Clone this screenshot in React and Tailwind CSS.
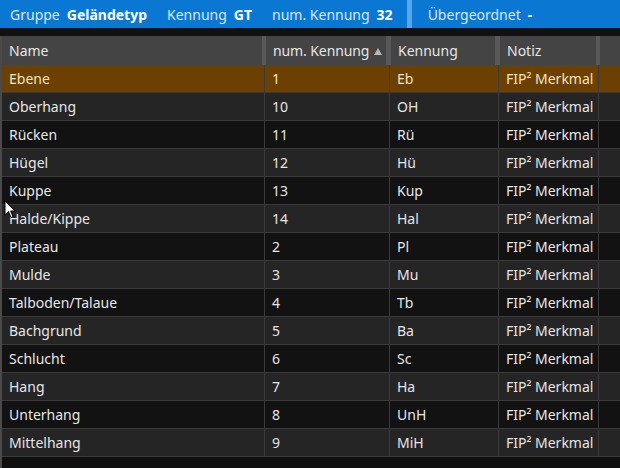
import React from "react";

const ROWS = [
  ["Ebene", "1", "Eb"],
  ["Oberhang", "10", "OH"],
  ["Rücken", "11", "Rü"],
  ["Hügel", "12", "Hü"],
  ["Kuppe", "13", "Kup"],
  ["Halde/Kippe", "14", "Hal"],
  ["Plateau", "2", "Pl"],
  ["Mulde", "3", "Mu"],
  ["Talboden/Talaue", "4", "Tb"],
  ["Bachgrund", "5", "Ba"],
  ["Schlucht", "6", "Sc"],
  ["Hang", "7", "Ha"],
  ["Unterhang", "8", "UnH"],
  ["Mittelhang", "9", "MiH"],
];

function InfoItem({ label, value }) {
  return (
    <span className="flex items-center gap-[7px]">
      <span className="text-[#dbe9f8]">{label}</span>
      <span className="font-bold text-white">{value}</span>
    </span>
  );
}

function Cursor() {
  return (
    <svg className="absolute left-[4px] top-[200px]" width="12" height="19" viewBox="0 0 12 19">
      <path d="M1 1 L1 15 L4.5 11.5 L7 17.5 L9 16.6 L6.6 11 L11 11 Z" fill="#fff" stroke="#000" strokeWidth="1" />
    </svg>
  );
}

export default function App() {
  return (
    <div
      className="relative w-[620px] h-[468px] overflow-hidden bg-[#101010] text-[14px]"
      style={{ fontFamily: '"Noto Sans", "Open Sans", sans-serif' }}
    >
      <div className="flex h-[28px] bg-[#0a78d2]">
        <div className="flex items-center gap-[20px] pl-[10px] pr-[14px]">
          <InfoItem label="Gruppe" value="Geländetyp" />
          <InfoItem label="Kennung" value="GT" />
          <InfoItem label="num. Kennung" value="32" />
        </div>
        <div className="w-[5px] bg-[#5aa6ec]" />
        <div className="flex items-center pl-[16px]">
          <InfoItem label="Übergeordnet" value="-" />
        </div>
      </div>
      <div className="h-[8px] bg-[#111]" />
      <div className="border-l-2 border-[#4a4a4a]">
        <div className="flex h-[29px] bg-[#444] text-[#e4e4e4]">
          <div className="flex w-[260px] items-center pl-[7px]">Name</div>
          <div className="w-[4px] bg-[#585858]" />
          <div className="flex w-[120px] items-center gap-[5px] pl-[7px]">
            <span className="tracking-[-0.1px]">num. Kennung</span>
            <svg width="8" height="7" viewBox="0 0 8 7" className="mt-[1px]">
              <path d="M4 0 L8 7 L0 7 Z" fill="#b8b8b8" />
            </svg>
          </div>
          <div className="w-[5px] bg-[#585858]" />
          <div className="flex w-[104px] items-center pl-[7px]">Kennung</div>
          <div className="w-[5px] bg-[#585858]" />
          <div className="flex w-[96px] items-center pl-[7px]">Notiz</div>
          <div className="w-[4px] bg-[#585858]" />
          <div className="flex-1" />
        </div>
        {ROWS.map((r, i) => {
          const bg = i === 0 ? "bg-[#6b4000] text-[#f3e3c4]" : i % 2 === 1 ? "bg-[#252525] text-[#e6e6e6]" : "bg-[#121212] text-[#e6e6e6]";
          return (
            <div key={r[0]} className={`flex h-[28px] border-b border-[#3a3a3a] ${bg}`}>
              <div className="flex w-[263px] items-center border-r border-[#3a3a3a] pl-[7px]">{r[0]}</div>
              <div className="flex w-[125px] items-center border-r border-[#3a3a3a] pl-[7px]">{r[1]}</div>
              <div className="flex w-[109px] items-center border-r border-[#3a3a3a] pl-[7px]">{r[2]}</div>
              <div className="flex w-[100px] items-center border-r border-[#3a3a3a] pl-[7px]">
                FIP² Merkmal
              </div>
              <div className="flex-1" />
            </div>
          );
        })}
        <div className="h-[20px]" />
      </div>
      <Cursor />
    </div>
  );
}
